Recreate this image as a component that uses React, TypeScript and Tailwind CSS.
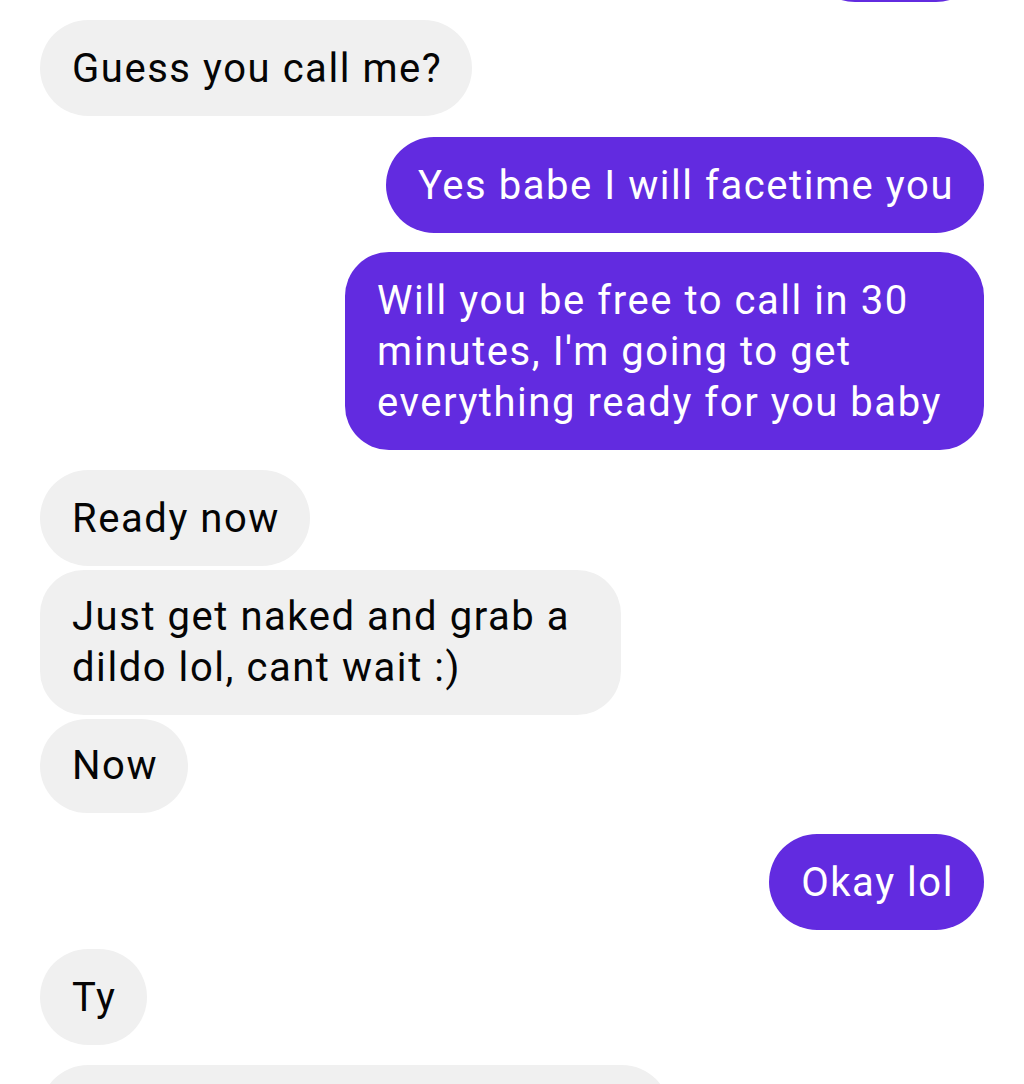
import React from "react";

const font = { fontFamily: "Roboto, 'Noto Sans', sans-serif" };

function In({ children, className = "" }: { children: React.ReactNode; className?: string }) {
  return (
    <div className={`self-start bg-[#f0f0f0] text-[#050505] pl-[32px] pr-[30px] py-[22.5px] text-[40px] leading-[51px] tracking-[1.55px] whitespace-nowrap ${className}`}>
      {children}
    </div>
  );
}

function Out({ children, className = "" }: { children: React.ReactNode; className?: string }) {
  return (
    <div className={`self-end bg-[#622be0] text-white pl-[32px] pr-[30px] py-[22.5px] text-[40px] leading-[51px] tracking-[1.55px] whitespace-nowrap ${className}`}>
      {children}
    </div>
  );
}

export default function App() {
  return (
    <div className="w-[1024px] h-[1084px] overflow-hidden bg-white" style={font}>
      <div className="flex flex-col px-[40px]">
        <div className="self-end w-[177px] h-[96px] -mt-[94px] rounded-full bg-[#622be0]" />
        <In className="mt-[18px] rounded-full">Guess you call me?</In>
        <Out className="mt-[21px] rounded-full">Yes babe I will facetime you</Out>
        <Out className="mt-[19px] w-[639px] rounded-[44px]">
          Will you be free to call in 30
          <br />
          minutes, I'm going to get
          <br />
          everything ready for you baby
        </Out>
        <In className="mt-[20px] rounded-full">Ready now</In>
        <In className="mt-[4px] w-[581px] h-[145px] rounded-[44px] pt-[21px]">
          Just get naked and grab a
          <br />
          dildo lol, cant wait :)
        </In>
        <In className="mt-[4px] h-[94px] pt-[21px] rounded-full">Now</In>
        <Out className="mt-[21px] rounded-full">Okay lol</Out>
        <In className="mt-[19px] rounded-full">Ty</In>
        <div className="self-start mt-[20px] w-[630px] h-[96px] rounded-full bg-[#f0f0f0]" />
      </div>
    </div>
  );
}
